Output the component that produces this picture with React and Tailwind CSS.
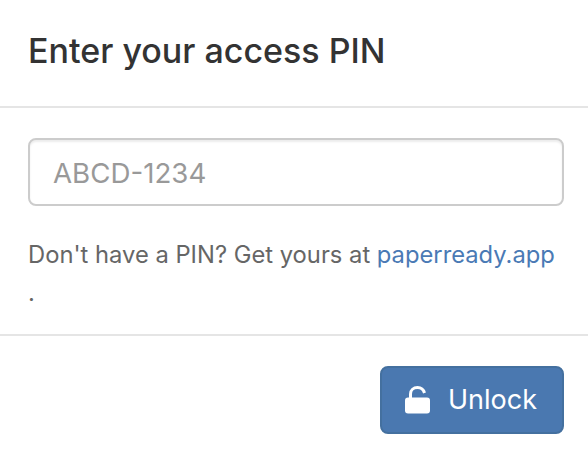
import React from 'react';

function UnlockIcon() {
    return (
        <svg width="26" height="28" viewBox="0 0 26 28" className="shrink-0" fill="none">
            <rect x="0" y="11.5" width="25" height="16" rx="3" fill="#fff" />
            <path d="M5.5 13V8C5.5 4 8.5 1.5 12.5 1.5C16 1.5 18.5 3.5 19.5 7" stroke="#fff" strokeWidth="3" />
        </svg>
    );
}

export default function App() {
    return (
        <div className="w-[588px] h-[460px] bg-white font-['Inter',sans-serif] text-[#333333]">
            <div className="h-[108px] border-b-2 border-[#e5e5e5] pl-[28px] pt-[29px]">
                <h4 className="text-[34px] leading-[44px] font-medium">Enter your access PIN</h4>
            </div>
            <div className="h-[228px] border-b-2 border-[#e5e5e5] px-[28px] pt-[30px]">
                <input
                    placeholder="ABCD-1234"
                    className="block w-[536px] h-[68px] pl-[23px] pr-[24px] pt-[2px] bg-white border-2 border-[#cccccc] rounded-[8px] text-[27.7px] outline-none placeholder:text-[#999999] shadow-[inset_0_2px_2px_rgba(0,0,0,0.075)]"
                />
                <p className="mt-[30px] text-[23.75px] leading-[38px] text-[#666666]">
                    Don't have a PIN? Get yours at <a href="#" className="text-[#4a7ab5]">paperready.app</a> .
                </p>
            </div>
            <div className="flex justify-end pt-[30px] pr-[24px]">
                <button className="flex items-center justify-start gap-[17px] pl-[23px] w-[184px] h-[68px] bg-[#4a78b0] border-2 border-[#44709f] rounded-[8px] text-white text-[27px]">
                    <UnlockIcon />
                    Unlock
                </button>
            </div>
        </div>
    );
}
